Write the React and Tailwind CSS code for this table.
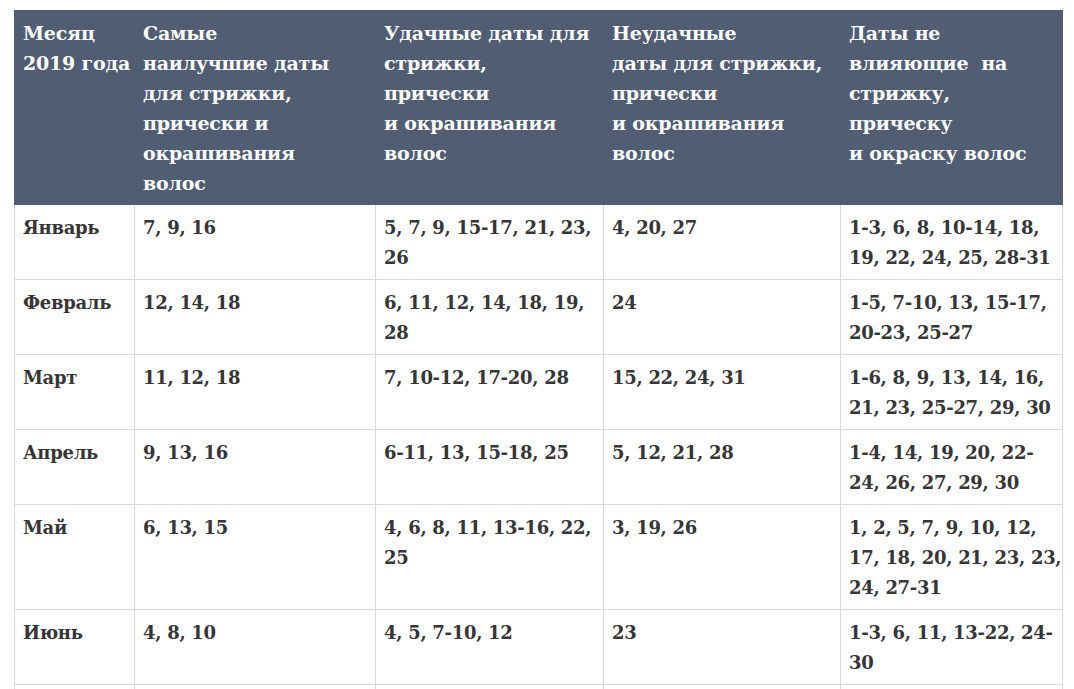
import React from 'react';

const headers = [
  ['Месяц', '2019 года'],
  ['Самые', 'наилучшие даты', 'для стрижки,', 'прически и', 'окрашивания', 'волос'],
  ['Удачные даты для', 'стрижки,', 'прически', 'и окрашивания', 'волос'],
  ['Неудачные', 'даты для стрижки,', 'прически', 'и окрашивания', 'волос'],
  ['Даты не', 'влияющие\u00a0 на', 'стрижку,', 'прическу', 'и окраску волос'],
];

const rows = [
  ['Январь', ['7, 9, 16'], ['5, 7, 9, 15-17, 21, 23,', '26'], ['4, 20, 27'], ['1-3, 6, 8, 10-14, 18,', '19, 22, 24, 25, 28-31']],
  ['Февраль', ['12, 14, 18'], ['6, 11, 12, 14, 18, 19,', '28'], ['24'], ['1-5, 7-10, 13, 15-17,', '20-23, 25-27']],
  ['Март', ['11, 12, 18'], ['7, 10-12, 17-20, 28'], ['15, 22, 24, 31'], ['1-6, 8, 9, 13, 14, 16,', '21, 23, 25-27, 29, 30']],
  ['Апрель', ['9, 13, 16'], ['6-11, 13, 15-18, 25'], ['5, 12, 21, 28'], ['1-4, 14, 19, 20, 22-', '24, 26, 27, 29, 30']],
  ['Май', ['6, 13, 15'], ['4, 6, 8, 11, 13-16, 22,', '25'], ['3, 19, 26'], ['1, 2, 5, 7, 9, 10, 12,', '17, 18, 20, 21, 23, 23,', '24, 27-31']],
  ['Июнь', ['4, 8, 10'], ['4, 5, 7-10, 12'], ['23'], ['1-3, 6, 11, 13-22, 24-', '30']],
];

const widths = ['w-[120px]', 'w-[241px]', 'w-[228px]', 'w-[237px]', 'w-[222px]'];

function Lines({ lines }) {
  return lines.map((l, i) => (
    <div key={i} className="whitespace-pre">{l}</div>
  ));
}

export default function App() {
  return (
    <div className="w-[1074px] h-[689px] overflow-hidden bg-white pt-[10px] pl-[14px]" style={{ fontFamily: '"DejaVu Serif", "Liberation Serif", serif' }}>
      <table className="table-fixed border-collapse w-[1049px] text-[18px] leading-[30px] font-bold">
        <thead>
          <tr className="bg-[#505d73] text-white">
            {headers.map((h, i) => (
              <th key={i} className={`${widths[i]} align-top text-left px-2 pt-[7px] pb-[6px] border border-[#505d73] border-l-[#c9ced6] first:border-l-[#505d73] text-[19px] font-bold tracking-[-0.2px]`}>
                <Lines lines={h} />
              </th>
            ))}
          </tr>
        </thead>
        <tbody className="text-[#363636]">
          {rows.map((r, ri) => (
            <tr key={ri}>
              <td className="align-top px-2 pt-[8px] pb-[6px] border border-[#d9d9d9] tracking-[-0.3px]">{r[0]}</td>
              {r.slice(1).map((c, ci) => (
                <td key={ci} className="align-top px-2 pt-[8px] pb-[6px] border border-[#d9d9d9] tracking-[-0.3px]">
                  <Lines lines={c} />
                </td>
              ))}
            </tr>
          ))}
          <tr className="h-[75px]">
            {widths.map((w, i) => (
              <td key={i} className="border border-[#d9d9d9]"></td>
            ))}
          </tr>
        </tbody>
      </table>
    </div>
  );
}
